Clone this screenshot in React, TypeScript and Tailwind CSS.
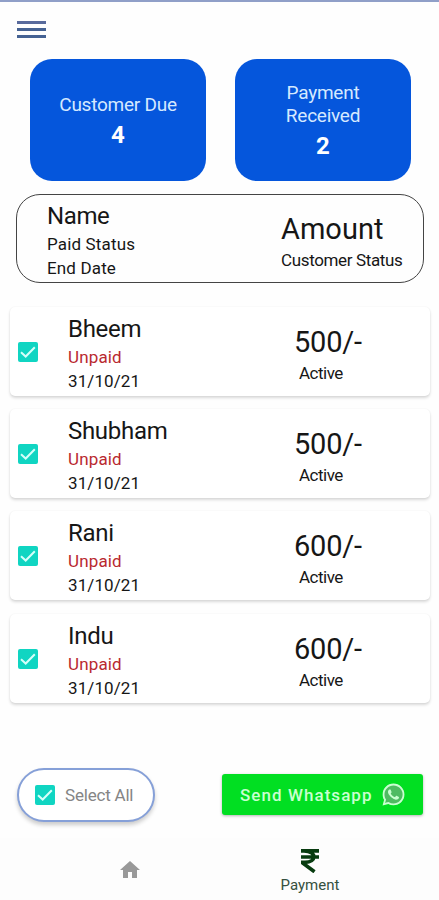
import { FaWhatsapp } from "react-icons/fa";
import { MdHome } from "react-icons/md";

const customers = [
  { name: "Bheem", status: "Unpaid", endDate: "31/10/21", amount: "500/-", state: "Active" },
  { name: "Shubham", status: "Unpaid", endDate: "31/10/21", amount: "500/-", state: "Active" },
  { name: "Rani", status: "Unpaid", endDate: "31/10/21", amount: "600/-", state: "Active" },
  { name: "Indu", status: "Unpaid", endDate: "31/10/21", amount: "600/-", state: "Active" },
];

function Checkbox() {
  return (
    <span className="grid h-5 w-5 shrink-0 place-items-center rounded-[2px] bg-[#10d5c2]">
      <svg viewBox="0 0 20 20" className="h-5 w-5" fill="none" stroke="#d5fffa" strokeWidth="2">
        <path d="M3 10.2 7.7 14.5 16.8 5.2" />
      </svg>
    </span>
  );
}

function StatCard({ label, value }: { label: string; value: number }) {
  return (
    <div className="flex h-[122px] w-[176px] flex-col items-center justify-center rounded-[22px] bg-[#0556dc] pt-[3px] text-center text-white">
      <span className="w-[130px] text-[19px] leading-[23px] tracking-[-0.25px] text-[#d5e9ff]">{label}</span>
      <span className="mt-[3px] text-[24px] font-bold leading-8">{value}</span>
    </div>
  );
}

export default function App() {
  return (
    <div className="flex h-[900px] w-[439px] flex-col overflow-hidden border-t-2 border-[#909fc8] bg-[#fefefe] font-['Roboto',sans-serif] text-[#161616]">
      <header className="flex h-[57px] shrink-0 items-start pl-[17px] pt-[19px]">
        <button aria-label="Menu" className="flex flex-col gap-[4px]">
          <span className="block h-[3px] w-[29px] bg-[#586a9c]" />
          <span className="block h-[3px] w-[29px] bg-[#456293]" />
          <span className="block h-[3px] w-[29px] bg-[#456293]" />
        </button>
      </header>

      <div className="flex shrink-0 justify-between pl-[30px] pr-[28px]">
        <StatCard label="Customer Due" value={4} />
        <StatCard label="Payment Received" value={2} />
      </div>

      <div className="ml-4 mr-[15px] mt-[13px] flex h-[89px] shrink-0 rounded-[24px] border border-[#444] pl-[30px] pt-[7px]">
        <div className="w-[234px]">
          <div className="text-[24px] leading-[28px] tracking-[-0.4px]">Name</div>
          <div className="mt-[2px] text-[17px] leading-[24px] tracking-[0.15px]">Paid Status</div>
          <div className="text-[17px] leading-[24px] tracking-[0.15px]">End Date</div>
        </div>
        <div className="pt-[9px]">
          <div className="text-[29px] leading-[36px]">Amount</div>
          <div className="pt-px text-[17px] leading-[24px] tracking-[-0.36px]">Customer Status</div>
        </div>
      </div>

      <ul className="mt-6 shrink-0 space-y-[13.2px] pl-[10px] pr-[9px]">
        {customers.map((c) => (
          <li
            key={c.name}
            className="flex h-[89px] rounded-[5px] bg-white pl-2 shadow-[0_2px_3px_rgba(0,0,0,0.15),0_0_2px_rgba(0,0,0,0.06)]"
          >
            <div className="w-[50px] pt-[35px]">
              <Checkbox />
            </div>
            <div className="w-[203px] pt-[8px]">
              <div className="text-[24px] leading-[28px] tracking-[-0.3px]">{c.name}</div>
              <div className="mt-[2px] text-[17px] leading-[24px] tracking-[0.15px] text-[#b9292f]">{c.status}</div>
              <div className="text-[17px] leading-[24px] tracking-[0.1px]">{c.endDate}</div>
            </div>
            <div className="w-[100px] pl-[23px] pt-[17px]">
              <div className="text-[29px] leading-[36px] tracking-[-0.2px]">{c.amount}</div>
              <div className="pl-[5px] pt-px text-[17px] leading-[24px] tracking-[-0.5px]">{c.state}</div>
            </div>
          </li>
        ))}
      </ul>

      <div className="mt-[65px] flex shrink-0 items-center justify-between pl-[17px] pr-4">
        <button className="flex h-[54px] w-[138px] items-center gap-[10px] rounded-full border-2 border-[#86a0d8] bg-white pl-4 text-[17px] tracking-[-0.2px] text-[#858585] shadow-[0_3px_4px_rgba(0,0,0,0.2)]">
          <Checkbox />
          <span className="pt-[3px]">Select All</span>
        </button>
        <button className="flex h-[41px] w-[201px] items-center gap-[8px] rounded-[3px] bg-[#01df22] pl-[18px] text-[17px] font-medium tracking-[1.05px] text-[#c9ffd0] shadow-[0_1px_3px_rgba(0,0,0,0.3)]">
          <span className="pt-[2px]">Send Whatsapp</span>
          <span className="rounded-full bg-[radial-gradient(circle,#4fbb62_60%,transparent_62%)]">
            <FaWhatsapp size={25} />
          </span>
        </button>
      </div>

      <nav className="mt-[16px] flex h-[62px] shrink-0 bg-[#fdfdfd]">
        <div className="flex w-[260px] justify-center pt-[20px]">
          <MdHome size={24} className="text-[#999]" />
        </div>
        <div className="flex w-[100px] flex-col items-center pt-[11px] text-[#355040]">
          <svg viewBox="0 0 18 24" className="h-6 w-[18px]" fill="none" stroke="#083c10" strokeWidth="3.6">
            <path d="M0 1.9h18M0 8h18M3 1.9c13 0 13 11.5 1 11.5H1l12.5 9.4" />
          </svg>
          <span className="mt-[3px] text-[15px] leading-[18px]">Payment</span>
        </div>
      </nav>
    </div>
  );
}
